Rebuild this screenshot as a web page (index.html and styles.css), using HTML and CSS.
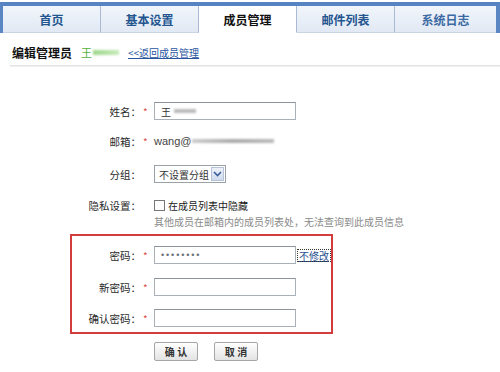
FILE: index.html
```html
<!DOCTYPE html>
<html>
<head>
<meta charset="utf-8">
<link rel="stylesheet" href="styles.css">
</head>
<body>
<div class="tabs">
  <div class="tab">首页</div>
  <div class="tab">基本设置</div>
  <div class="tab active">成员管理</div>
  <div class="tab">邮件列表</div>
  <div class="tab light">系统日志</div>
</div>
<div class="header">
  <span class="title">编辑管理员</span>
  <span class="who"><span class="wang">王</span><span class="blurg"></span></span>
  <a class="back">&lt;&lt;返回成员管理</a>
</div>
<div class="form">
  <div class="row r-name">
    <div class="label">姓名：</div><div class="star">*</div>
    <div class="field"><div class="input"><span class="val">王</span><span class="blur short"></span></div></div>
  </div>
  <div class="row r-mail">
    <div class="label">邮箱：</div><div class="star">*</div>
    <div class="field"><span class="mail">wang@</span><span class="blur long"></span></div>
  </div>
  <div class="row r-group">
    <div class="label">分组：</div><div class="star"></div>
    <div class="field"><div class="select"><span>不设置分组</span><span class="arrow"><svg width="9" height="6" viewBox="0 0 9 6"><path d="M1 1 L4.5 4.5 L8 1" fill="none" stroke="#3a5f9a" stroke-width="1.6"/></svg></span></div></div>
  </div>
  <div class="row r-priv">
    <div class="label">隐私设置：</div><div class="star"></div>
    <div class="field"><span class="check"></span><span class="checktext">在成员列表中隐藏</span></div>
  </div>
  <div class="row r-help">
    <div class="label"></div><div class="star"></div>
    <div class="field help">其他成员在邮箱内的成员列表处，无法查询到此成员信息</div>
  </div>
  <div class="pwbox">
    <div class="row r-pw1">
      <div class="label">密码：</div><div class="star">*</div>
      <div class="field"><div class="input"><span class="dots">••••••••</span></div><a class="nochange">不修改</a></div>
    </div>
    <div class="row r-pw2">
      <div class="label">新密码：</div><div class="star">*</div>
      <div class="field"><div class="input"></div></div>
    </div>
    <div class="row r-pw3">
      <div class="label">确认密码：</div><div class="star">*</div>
      <div class="field"><div class="input"></div></div>
    </div>
  </div>
  <div class="row r-btn">
    <div class="label"></div><div class="star"></div>
    <div class="field"><button class="btn">确 认</button><button class="btn">取 消</button></div>
  </div>
</div>
</body>
</html>
```
FILE: styles.css
```css
html, body { margin: 0; padding: 0; background: #fff; }
body {
  width: 500px;
  height: 372px;
  overflow: hidden;
  padding-top: 2px;
  box-sizing: border-box;
  font-family: "Noto Sans CJK SC", "Liberation Sans", sans-serif;
  font-size: 10px;
  color: #222;
}
.tabs {
  display: flex;
  height: 31px;
  box-sizing: border-box;
  border-top: 4px solid #5683c2;
  border-left: 3px solid #5a86c3;
  border-right: 4px solid #5a86c3;
}
.tab {
  width: 98px;
  box-sizing: border-box;
  border-right: 1px solid #a9bad2;
  border-bottom: 1px solid #c9d4e3;
  background: linear-gradient(#f1f5fb, #e1e9f4);
  display: flex;
  align-items: center;
  justify-content: center;
  font-size: 12px;
  font-weight: bold;
  color: #23558f;
}
.tab:last-child { border-right: none; flex: 1; }
.tab.active {
  background: #fff;
  color: #111;
  border-bottom-color: #fff;
}
.tab.light { color: #3b6aa3; font-weight: 600; }
.header {
  margin-left: 10px;
  padding: 6px 0 0 2px;
  height: 26px;
  display: flex;
  align-items: center;
  border-bottom: 1px solid #e2e2e2;
  box-shadow: 0 1px 1px #f2f2f2;
}
.title { font-size: 12px; font-weight: bold; color: #111; }
.who { margin-left: 9px; display: flex; align-items: center; }
.wang { color: #55b040; font-size: 11px; }
.blurg {
  width: 26px; height: 5px; margin-left: 1px;
  background: linear-gradient(90deg, #9dd68a, #c8ecbb);
  filter: blur(1px);
}
.back {
  margin-left: 9px;
  font-size: 10px;
  color: #2a55a0;
  text-decoration: underline;
}
.form { margin: 36px 0 0 70px; }
.row {
  display: flex;
  align-items: center;
  height: 18px;
  padding-left: 2px;
}
.label { width: 69px; text-align: right; color: #2a2a2a; font-size: 10.5px; }
.star { width: 13px; color: #e24c4c; padding-left: 2px; box-sizing: border-box; font-size: 10px; }
.field { display: flex; align-items: center; }
.input {
  width: 142px; height: 18px;
  box-sizing: border-box;
  border: 1px solid #a9b0b8;
  border-top-color: #8d949c;
  background: #fff;
  display: flex; align-items: center;
  padding-left: 6px;
}
.val { color: #333; font-size: 10px; }
.blur { display: inline-block; height: 4px; filter: blur(1px); }
.blur.short { width: 22px; margin-left: 3px; background: #bbb; }
.blur.long { width: 82px; height: 4px; margin-left: 1px; background: linear-gradient(90deg, #ccc, #aaa, #bbb); }
.mail { font-family: "Liberation Sans", sans-serif; font-size: 11px; color: #444; }
.r-mail { margin-top: 12px; }
.r-group { margin-top: 15px; }
.select {
  width: 72px; height: 18px; box-sizing: border-box;
  border: 1px solid #9aa1a8;
  display: flex; align-items: center; justify-content: space-between;
  padding: 0 1px 0 4px;
  color: #333;
}
.arrow {
  width: 13px; height: 14px;
  background: linear-gradient(#eef2fa, #cfdaec);
  border: 1px solid #b5c2d8; box-sizing: border-box;
  display: flex; align-items: center; justify-content: center;
}
.r-priv { margin-top: 13px; }
.check {
  width: 11px; height: 11px; box-sizing: border-box;
  border: 1px solid #777; background: #fff;
  margin-right: 3px;
}
.checktext { color: #222; }
.r-help { margin-top: 1px; height: 12px; }
.help { color: #8a8a8a; white-space: nowrap; }
.pwbox {
  margin-top: 7px;
  width: 263px; height: 100px;
  box-sizing: border-box;
  border: 2px solid #d23c3c;
  padding-top: 10px;
}
.pwbox .row { padding-left: 0; }
.r-pw2 { margin-top: 14px; }
.r-pw3 { margin-top: 13px; }
.dots {
  font-family: "Liberation Sans", sans-serif;
  font-size: 9px; color: #6a7078; letter-spacing: 1.9px;
}
.nochange {
  margin-left: 2px;
  color: #1f4f8f;
  text-decoration: underline;
  outline: 1px dotted #333;
  line-height: 11px;
  padding: 0 1px;
}
.r-btn { margin-top: 8px; height: 19px; }
.btn {
  width: 44px; height: 19px;
  box-sizing: border-box;
  margin: 0 16px 0 0;
  padding: 0;
  border: 1px solid #a6a6a6;
  border-radius: 2px;
  background: linear-gradient(#ffffff, #e3e3e3);
  font-family: "Noto Sans CJK SC", sans-serif;
  font-size: 10px; font-weight: bold; color: #333;
}
```
